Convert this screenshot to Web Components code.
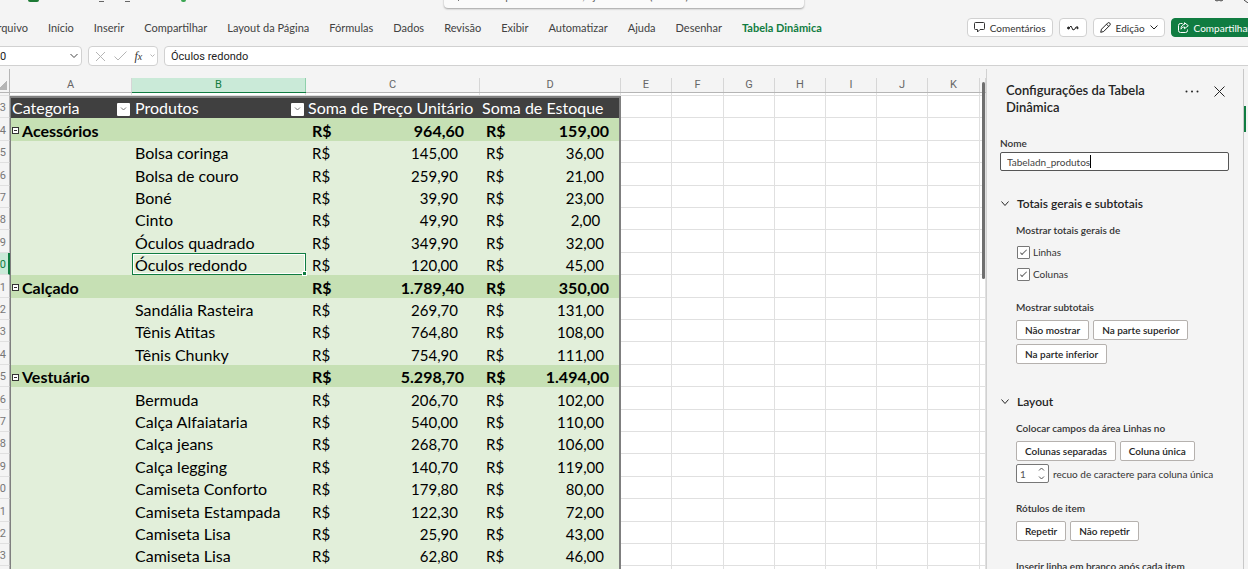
<!DOCTYPE html>
<html lang="pt-BR">
<head>
<meta charset="utf-8">
<title>Planilha</title>
<style>
  html, body {
    height: 100%;
    margin: 0;
  }
  body {
    font-family: Lato, "Open Sans", sans-serif;
    font-size: 11px;
    color: #424242;
    background: #f4f4f4;
    overflow: hidden;
  }
</style>
</head>
<body>
<workbook-app></workbook-app>

<script>
/**
 * Create a template element from a string.
 *
 * @param {string} html the markup and styles.
 * @returns {HTMLTemplateElement} the template.
 */
const makeTemplate = html => {
  const template = document.createElement('template')
  template.innerHTML = html
  return template
}

/**
 * Base class that attaches the shadow root.
 */
class BaseElement extends HTMLElement {
  /**
   * Creates an instance of the current type.
   */
  constructor () {
    super()
    this.attachShadow({ mode: 'open' })
      .appendChild(this.constructor.template.content.cloneNode(true))
  }
}

/**
 * Title bar with the search box.
 */
customElements.define('title-bar', class extends BaseElement {
  static template = makeTemplate(`
  <style>
    :host {
      display: flex;
      align-items: flex-end;
      height: 12px;
      overflow: hidden;
      position: relative;
    }
    .left {
      flex: 1 1 0;
      align-self: flex-start;
      display: flex;
    }
    .app { width: 11px; height: 2px; margin-left: 28px; background: #1d7a35; border-radius: 0 0 2px 2px; }
    .dash { width: 5px; height: 1px; margin: 1px 0 0 60px; background: #666; }
    .dash + .dash { margin-left: 21px; }
    .saved { width: 5px; height: 2px; margin-left: 51px; background: #3ba552; border-radius: 0 0 3px 3px; }
    .search {
      flex: none;
      width: 360px;
      height: 26px;
      margin-bottom: 4px;
      box-sizing: border-box;
      display: flex;
      align-items: center;
      gap: 2px;
      padding: 0 14px;
      background: #fafafa;
      border-radius: 4px;
      box-shadow: 0 1px 2px rgba(0, 0, 0, .35);
    }
    input {
      flex: 1;
      border: 0;
      padding: 0;
      background: none;
      font: inherit;
      outline: 0;
    }
    input::placeholder { color: #616161; opacity: 1; }
    .right {
      flex: 1 1 0;
      align-self: flex-start;
      display: flex;
      justify-content: flex-end;
      gap: 21px;
    }
    .right svg { display: block; }
  </style>
  <div class="left"><i class="app"></i><i class="dash"></i><i class="dash"></i><i class="saved"></i></div>
  <div class="search">
    <svg width="10" height="14" fill="none" stroke="#616161"><circle cx="5" cy="6" r="4"/><path d="M3 9L0 13"/></svg>
    <input type="search" aria-label="Buscar" placeholder="Buscar por ferramentas, ajuda e mais (Alt + B)">
  </div>
  <div class="right">
    <svg width="8" height="3" fill="none" stroke="#444"><path d="M0 0q2 2 4 0q2 2 4 0"/></svg>
    <svg width="4" height="3" fill="none" stroke="#444"><path d="M0 0L4 3"/></svg>
  </div>
  `)
})

/**
 * Small toolbar button, the attribute "primary" makes it green.
 */
customElements.define('tool-button', class extends BaseElement {
  static template = makeTemplate(`
  <style>
    :host { display: block; }
    button {
      display: flex;
      align-items: center;
      justify-content: center;
      gap: 5px;
      min-width: 28px;
      height: 19px;
      padding: 0 6px;
      border: 1px solid #d1d1d1;
      border-radius: 4px;
      background: #fff;
      color: #333;
      font: inherit;
      font-size: 10px;
      white-space: nowrap;
    }
    :host([primary]) button {
      background: #107c41;
      border-color: #107c41;
      color: #fff;
    }
  </style>
  <button type="button"><slot></slot></button>
  `)
})

/**
 * Ribbon with the tabs and the action buttons.
 */
customElements.define('ribbon-tabs', class extends BaseElement {
  static template = makeTemplate(`
  <style>
    :host {
      display: flex;
      align-items: center;
      justify-content: space-between;
      height: 34px;
      overflow: hidden;
    }
    nav {
      display: flex;
      gap: 20px;
      margin-left: -10px;
      padding-bottom: 2px;
      white-space: nowrap;
    }
    a { color: #424242; text-decoration: none; line-height: 16px; }
    a.active { color: #107c41; font-weight: 700; }
    .actions {
      display: flex;
      gap: 6px;
      margin-right: -10px;
      padding-bottom: 3px;
    }
    svg { display: block; flex: none; }
  </style>
  <nav>
    <a href="#">Arquivo</a>
    <a href="#">Início</a>
    <a href="#">Inserir</a>
    <a href="#">Compartilhar</a>
    <a href="#">Layout da Página</a>
    <a href="#">Fórmulas</a>
    <a href="#">Dados</a>
    <a href="#">Revisão</a>
    <a href="#">Exibir</a>
    <a href="#">Automatizar</a>
    <a href="#">Ajuda</a>
    <a href="#">Desenhar</a>
    <a href="#" class="active">Tabela Dinâmica</a>
  </nav>
  <div class="actions">
    <tool-button>
      <svg width="11" height="11" fill="none" stroke="#333"><path d="M1.5.5h8a1 1 0 0 1 1 1v5a1 1 0 0 1-1 1H6L3.5 10V7.500h-2a1 1 0 0 1-1-1v-5a1 1 0 0 1 1-1z"/></svg>
      Comentários
    </tool-button>
    <tool-button aria-label="Atualizações">
      <svg width="12" height="8" fill="none" stroke="#222"><path d="M1 4h1l2-2 2 4 2-1 1-2h2" stroke-linejoin="round"/><circle cx="1.500" cy="4" r="1" fill="#222"/><circle cx="10.500" cy="4" r=".7" fill="#222"/></svg>
    </tool-button>
    <tool-button>
      <svg width="11" height="11" fill="none" stroke="#222"><path d="M.7 10.300l.8-3.100L7.600 1.100a1.500 1.500 0 0 1 2.200 2.200L3.700 9.500zM6.500 2.200l2.200 2.200"/></svg>
      Edição
      <svg width="8" height="5" fill="none" stroke="#222"><path d="M.5.500L4 4 7.500.500"/></svg>
    </tool-button>
    <tool-button primary>
      <svg width="11" height="11" fill="none" stroke="#fff"><path d="M4.500 1.500h-2a2 2 0 0 0-2 2v5a2 2 0 0 0 2 2h5a2 2 0 0 0 2-2v-1M6.500.700l3.800 3-3.800 3V5C4.800 5 3.800 5.700 3 7.200 3 4.500 4.300 2.600 6.500 2.400z"/></svg>
      Compartilhar
    </tool-button>
  </div>
  `)
})

/**
 * Name box, formula buttons and formula input.
 */
customElements.define('formula-bar', class extends BaseElement {
  static template = makeTemplate(`
  <style>
    :host {
      display: flex;
      gap: 6px;
      height: 20px;
      padding-bottom: 3px;
      overflow: hidden;
      font-family: Roboto, "Liberation Sans", sans-serif;
    }
    .box {
      box-sizing: border-box;
      display: flex;
      align-items: center;
      background: #fff;
      border: 1px solid #d1d1d1;
      border-radius: 4px;
    }
    .name { width: 102px; margin-left: -20px; padding: 0 3px 0 6px; }
    .name input { width: 60px; flex: 1; }
    .buttons { width: 70px; justify-content: space-between; padding: 0 2px 0 6px; }
    .formula { flex: 1; margin-right: -8px; padding: 0 6px; }
    input {
      width: 100%;
      border: 0;
      padding: 0;
      background: none;
      color: #222;
      font: inherit;
      outline: 0;
    }
    button {
      border: 0;
      padding: 0;
      background: none;
      color: #333;
      font: italic 12px "Liberation Serif", serif;
    }
    button svg, .name svg { display: block; }
  </style>
  <div class="box name">
    <input aria-label="Caixa de nome" value="B10">
    <svg width="8" height="6" fill="none" stroke="#444"><path d="M.5 1L4 4.500 7.500 1"/></svg>
  </div>
  <div class="box buttons">
    <button type="button" aria-label="Cancelar"><svg width="11" height="11" fill="none" stroke="#b5b5b5"><path d="M1 1l9 9M10 1l-9 9"/></svg></button>
    <button type="button" aria-label="Inserir"><svg width="13" height="10" fill="none" stroke="#b5b5b5"><path d="M.5 5.500L4 9l8.500-8.500"/></svg></button>
    <button type="button"><i>f</i><small>x</small></button>
    <button type="button" aria-label="Mais"><svg width="5" height="4" fill="none" stroke="#b5b5b5"><path d="M.5.500l2 2 2-2"/></svg></button>
  </div>
  <div class="box formula"><input aria-label="Fórmula" value="Óculos redondo"></div>
  `)
})

/**
 * The worksheet with the pivot table.
 */
customElements.define('sheet-grid', class extends BaseElement {
  static template = makeTemplate(`
  <style>
    :host {
      display: block;
      position: relative;
      overflow: hidden;
      background: #f4f4f4;
    }
    table {
      width: calc(100% + 14px);
      margin-left: -14px;
      table-layout: fixed;
      border-collapse: separate;
      border-spacing: 0;
      background: #fff;
      font-family: Lato, sans-serif;
      font-size: 16px;
      color: #000;
    }
    th, td {
      box-sizing: border-box;
      padding: 0;
      line-height: 20px;
      white-space: nowrap;
      font-weight: 400;
      text-align: left;
      border: 0 solid #e0e0e0;
      overflow: hidden;
    }
    thead th {
      height: 24px;
      padding-top: 9px;
      line-height: 14px;
      background: #f4f4f4;
      border-bottom: 1px solid #b5b5b5;
      text-align: center;
      font-family: Roboto, "Liberation Sans", sans-serif;
      font-size: 11px;
      color: #666;
    }
    thead span { display: block; border-right: 1px solid #d6d6d6; }
    thead th.on { color: #107c41; border-color: #107c41; }
    thead th.on span { background: #caead8; border-color: #8fd0ab; }
    tbody th {
      background: #f4f4f4;
      border-width: 0 1px 1px 0;
      border-right-color: #b5b5b5;
      padding: 3px 3px 0 0;
      line-height: 18px;
      text-align: right;
      font-family: Roboto, "Liberation Sans", sans-serif;
      font-size: 11px;
      color: #777;
    }
    tbody th.on { background: #caead8; color: #107c41; border-right: 2px solid #107c41; padding-right: 2px; }
    tr { height: 22px; }
    tr.tall { height: 23px; }
    tr.gap, tr.gap > * { height: 3px; padding: 0; line-height: 1px; }
    td { border-width: 0 1px 1px 0; }
    .p { border-width: 0; padding-top: 2px; background: #e2efda; }
    .group .p { background: #c6e0b4; font-weight: 700; }
    .titles .p {
      padding-top: 0;
      background: #404040;
      color: #fff;
      border-top: 2px solid #7f7f7f;
    }
    .p.a { border-left: 1px solid #7f7f7f; padding-left: 1px; }
    .p.b { padding-left: 3px; }
    .titles .c, .titles .d { padding-left: 2px; }
    .p.d { border-right: 2px solid #7f7f7f; }
    .flex { display: flex; align-items: center; justify-content: space-between; }
    .money { font-size: 15px; }
    .group .money { font-size: 16px; }
    .c .money { padding: 0 22px 0 6px; }
    .d .money { padding: 0 15px 0 6px; }
    .group .c .money { padding-right: 16px; }
    .group .d .money { padding-right: 10px; }
    .name { display: flex; align-items: center; gap: 3px; }
    .toggle {
      width: 7px;
      height: 7px;
      padding: 0;
      border: 1px solid #333;
      background: #fff linear-gradient(#333, #333) center / 3px 1px no-repeat;
      box-sizing: border-box;
    }
    .filter {
      width: 13px;
      height: 13px;
      margin: 2px 2px 0 0;
      padding: 0;
      border: 0;
      border-radius: 1px;
      background: #fff;
      display: flex;
      align-items: center;
      justify-content: center;
    }
    td.selected {
      box-shadow: inset 0 0 0 1px #107c41, inset 0 0 0 2px #fff;
      position: relative;
      overflow: visible;
    }
    td.selected::after {
      content: "";
      position: absolute;
      right: -1px;
      bottom: -1px;
      width: 3px;
      height: 3px;
      background: #107c41;
      border: 1px solid #fff;
    }
    .corner {
      border-right: 1px solid #b5b5b5;
      padding: 0;
      background: linear-gradient(135deg, #f4f4f4 50%, #b5b5b5 50%) right 2px bottom 2px / 9px 9px no-repeat #f4f4f4;
    }
    .scroll {
      position: absolute;
      top: 13px;
      right: 1px;
      width: 3px;
      height: 197px;
      border-radius: 2px;
      background: #6e6e6e;
    }
  </style>
  <table>
    <colgroup></colgroup>
    <thead><tr></tr></thead>
    <tbody></tbody>
  </table>
  <div class="scroll"></div>
  `)

  /**
   * Called after the element is inserted into the DOM.
   */
  connectedCallback () {
    const root = this.shadowRoot
    const widths = [24, 122, 174, 174, 141, 51, 52, 51, 51, 51, 51, 52]
    const letters = ['A', 'B', 'C', 'D', 'E', 'F', 'G', 'H', 'I', 'J', 'K', '']
    const rows = [
      ['Acessórios', '', '964,60', '159,00'],
      ['', 'Bolsa coringa', '145,00', '36,00'],
      ['', 'Bolsa de couro', '259,90', '21,00'],
      ['', 'Boné', '39,90', '23,00'],
      ['', 'Cinto', '49,90', '2,00&nbsp;'],
      ['', 'Óculos quadrado', '349,90', '32,00'],
      ['', 'Óculos redondo', '120,00', '45,00'],
      ['Calçado', '', '1.789,40', '350,00'],
      ['', 'Sandália Rasteira', '269,70', '131,00'],
      ['', 'Tênis Atitas', '764,80', '108,00'],
      ['', 'Tênis Chunky', '754,90', '111,00'],
      ['Vestuário', '', '5.298,70', '1.494,00'],
      ['', 'Bermuda', '206,70', '102,00'],
      ['', 'Calça Alfaiataria', '540,00', '110,00'],
      ['', 'Calça jeans', '268,70', '106,00'],
      ['', 'Calça legging', '140,70', '119,00'],
      ['', 'Camiseta Conforto', '179,80', '80,00'],
      ['', 'Camiseta Estampada', '122,30', '72,00'],
      ['', 'Camiseta Lisa', '25,90', '43,00'],
      ['', 'Camiseta Lisa', '62,80', '46,00'],
      ['', '', '', '']
    ]
    const empty = '<td></td>'.repeat(8)
    const filter = '<button class="filter" aria-label="Filtrar"><svg width="7" height="4" fill="none" stroke="#777"><path d="M1 .5L3.500 3 6 .5"/></svg></button>'
    const money = value => value ? `<div class="flex money"><span>R$</span><span>${value}</span></div>` : ''

    root.querySelector('colgroup').innerHTML = widths.map(w => `<col style="width:${w}px">`).join('') + '<col>'
    root.querySelector('thead tr').innerHTML = '<th class="corner"></th>' +
      letters.map(l => `<th${l === 'B' ? ' class="on"' : ''}><span>${l || '&nbsp;'}</span></th>`).join('')

    let html = `<tr class="gap"><th></th>${'<td></td>'.repeat(4)}${empty}</tr>
      <tr class="titles"><th>3</th>
        <td class="p a"><div class="flex">Categoria${filter}</div></td>
        <td class="p b"><div class="flex">Produtos${filter}</div></td>
        <td class="p c">Soma de Preço Unitário</td>
        <td class="p d">Soma de Estoque</td>${empty}</tr>`
    rows.forEach(([category, product, price, stock], i) => {
      const number = i + 4
      const tall = i % 5 === 0 || i % 5 === 2
      const on = number === 10
      html += `<tr class="${category ? 'group' : ''}${tall ? ' tall' : ''}">
        <th${on ? ' class="on"' : ''}>${number}</th>
        <td class="p a">${category ? `<div class="name"><button class="toggle" aria-label="Recolher"></button>${category}</div>` : ''}</td>
        <td class="p b${on ? ' selected' : ''}">${product}</td>
        <td class="p c">${money(price)}</td>
        <td class="p d">${money(stock)}</td>${empty}</tr>`
    })
    root.querySelector('tbody').innerHTML = html
  }
})

/**
 * Outlined button used in the settings pane.
 */
customElements.define('pane-button', class extends BaseElement {
  static template = makeTemplate(`
  <style>
    :host { display: block; }
    button {
      height: 20px;
      padding: 0 8px;
      border: 1px solid #b5b1ae;
      border-radius: 2px;
      background: #fff;
      color: #242424;
      font: inherit;
      font-size: 10px;
      font-weight: 600;
      white-space: nowrap;
    }
  </style>
  <button type="button"><slot></slot></button>
  `)
})

customElements.define('pane-section', class extends BaseElement {
  static template = makeTemplate(`
  <style>
    :host { display: block; }
    h3 { margin: 0; font-size: 12px; line-height: 16px; font-weight: 600; }
    button {
      display: flex;
      align-items: center;
      gap: 8px;
      padding: 0 0 0 1px;
      border: 0;
      background: none;
      color: #242424;
      font: inherit;
    }
    .body { padding: 10px 0 0 16px; }
  </style>
  <h3><button type="button" aria-expanded="true">
    <svg width="8" height="6" fill="none" stroke="#242424"><path d="M.5.500L4 4.500 7.500.500"/></svg>
    <span></span>
  </button></h3>
  <div class="body"><slot></slot></div>
  `)

  /**
   * Called after the element is inserted into the DOM.
   */
  connectedCallback () {
    this.shadowRoot.querySelector('span').textContent = this.getAttribute('heading')
  }
})

/**
 * The pivot table settings pane.
 */
customElements.define('settings-pane', class extends BaseElement {
  static template = makeTemplate(`
  <style>
    :host {
      display: block;
      box-sizing: border-box;
      border-left: 1px solid #d1d1d1;
      padding: 13px 14px 0 13px;
      overflow: hidden;
      font-size: 10px;
    }
    header {
      display: flex;
      align-items: flex-start;
      justify-content: space-between;
      padding: 0 4px 0 6px;
    }
    h2 { margin: 0; width: 160px; font-size: 13px; line-height: 17px; font-weight: 600; color: #242424; }
    .icons { display: flex; align-items: center; gap: 15px; height: 19px; }
    .icons button { border: 0; padding: 0; background: none; }
    .icons svg { display: block; }
    label, p { margin: 0; line-height: 16px; color: #333; }
    .label { display: block; font-weight: 600; }
    .nome { margin-top: 19px; }
    .textbox {
      display: flex;
      height: 19px;
      margin-top: 1px;
      box-sizing: border-box;
      border: 1px solid #555;
      border-radius: 2px;
      padding: 2px 6px;
      background: #fff;
    }
    /* the caret stands after the last letter */
    .textbox input {
      field-sizing: content;
      border: 0;
      border-right: 1px solid #000;
      padding: 0;
      background: none;
      color: #424242;
      font: inherit;
      outline: 0;
    }
    pane-section { margin-top: 25px; }
    pane-section + pane-section { margin-top: 30px; }
    .check { display: flex; align-items: center; gap: 3px; height: 16px; margin-top: 6px; padding-left: 1px; }
    .check input {
      appearance: none;
      width: 13px;
      height: 13px;
      margin: 0;
      border: 1px solid #777;
      border-radius: 1px;
      background: #fff;
      box-sizing: border-box;
      display: grid;
      place-items: center;
    }
    .check input:checked::before {
      content: "";
      width: 7px;
      height: 3px;
      border: solid #666;
      border-width: 0 0 1px 1px;
      box-sizing: border-box;
      transform: translateY(-1px) rotate(-45deg);
    }
    .field + .field { margin-top: 17px; }
    .buttons { display: flex; flex-wrap: wrap; gap: 4px; margin-top: 5px; }
    .indent { display: flex; align-items: center; gap: 4px; margin-top: 3px; }
    .number {
      display: flex;
      align-items: center;
      box-sizing: border-box;
      width: 33px;
      height: 19px;
      border: 1px solid #777;
      border-radius: 2px;
      background: #fff;
      padding: 0 3px;
    }
    .number input { width: 18px; border: 0; padding: 0; background: none; color: #555; font: inherit; outline: 0; appearance: textfield; }
    input::-webkit-inner-spin-button { display: none; }
  </style>
  <header>
    <h2>Configurações da Tabela Dinâmica</h2>
    <div class="icons">
      <button type="button" aria-label="Mais opções"><svg width="14" height="3" fill="#242424"><circle cx="1.500" cy="1.500" r="1"/><circle cx="7" cy="1.500" r="1"/><circle cx="12.500" cy="1.500" r="1"/></svg></button>
      <button type="button" aria-label="Fechar"><svg width="11" height="11" fill="none" stroke="#242424"><path d="M.5.500l10 10M10.500.500l-10 10"/></svg></button>
    </div>
  </header>
  <div class="nome">
    <label class="label" for="nome">Nome</label>
    <div class="textbox"><input id="nome" value="Tabeladn_produtos"></div>
  </div>
  <pane-section heading="Totais gerais e subtotais">
    <div class="field">
      <p class="label">Mostrar totais gerais de</p>
      <label class="check"><input type="checkbox" checked>Linhas</label>
      <label class="check"><input type="checkbox" checked>Colunas</label>
    </div>
    <div class="field">
      <p class="label">Mostrar subtotais</p>
      <div class="buttons">
        <pane-button>Não mostrar</pane-button>
        <pane-button>Na parte superior</pane-button>
        <pane-button>Na parte inferior</pane-button>
      </div>
    </div>
  </pane-section>
  <pane-section heading="Layout">
    <div class="field">
      <p class="label">Colocar campos da área Linhas no</p>
      <div class="buttons">
        <pane-button>Colunas separadas</pane-button>
        <pane-button>Coluna única</pane-button>
      </div>
      <div class="indent">
        <span class="number"><input id="recuo" type="number" value="1"><svg width="7" height="13" fill="none" stroke="#555"><path d="M1 3.500L3.500 1 6 3.500M1 9.500L3.500 12 6 9.500"/></svg></span>
        <label for="recuo">recuo de caractere para coluna única</label>
      </div>
    </div>
    <div class="field">
      <p class="label">Rótulos de item</p>
      <div class="buttons">
        <pane-button>Repetir</pane-button>
        <pane-button>Não repetir</pane-button>
      </div>
    </div>
    <div class="field">
      <p class="label">Inserir linha em branco após cada item</p>
    </div>
  </pane-section>
  `)
})

/**
 * The whole window.
 */
customElements.define('workbook-app', class extends BaseElement {
  static template = makeTemplate(`
  <style>
    :host {
      display: flex;
      flex-direction: column;
      height: 100vh;
      overflow: hidden;
    }
    title-bar, ribbon-tabs, formula-bar { flex: none; }
    main { flex: 1; min-height: 0; display: flex; }
    sheet-grid { flex: 1; min-width: 0; }
    settings-pane { flex: none; width: 257px; }
    .rail { flex: none; width: 4px; border-left: 1px solid #c8c8c8; padding-top: 37px; }
    .rail i { display: block; width: 2px; height: 26px; background: #107c41; }
  </style>
  <title-bar></title-bar>
  <ribbon-tabs></ribbon-tabs>
  <formula-bar></formula-bar>
  <main>
    <sheet-grid></sheet-grid>
    <settings-pane></settings-pane>
    <div class="rail"><i></i></div>
  </main>
  `)
})
</script>
</body>
</html>
